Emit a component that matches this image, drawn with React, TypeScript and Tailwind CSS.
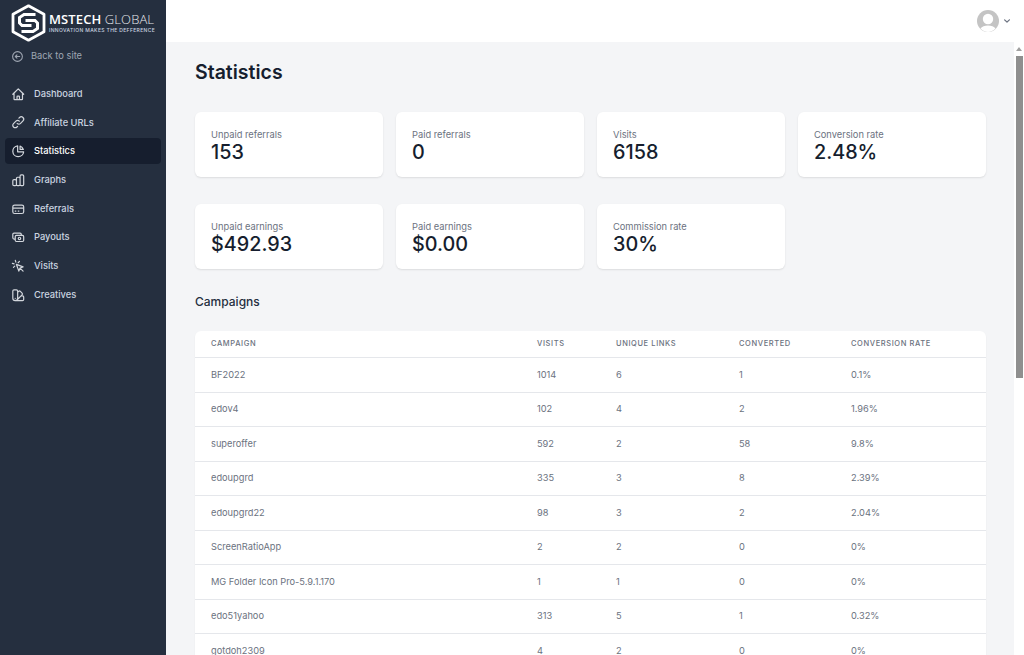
import React from "react";
import {
  HiOutlineHome,
  HiOutlineLink,
  HiOutlineChartPie,
  HiOutlineChartBar,
  HiOutlineCreditCard,
  HiOutlineCash,
  HiOutlineCursorClick,
  HiOutlineColorSwatch,
  HiOutlineArrowCircleLeft,
  HiChevronDown,
} from "react-icons/hi";

const nav = [
  { label: "Dashboard", Icon: HiOutlineHome },
  { label: "Affiliate URLs", Icon: HiOutlineLink },
  { label: "Statistics", Icon: HiOutlineChartPie, active: true },
  { label: "Graphs", Icon: HiOutlineChartBar },
  { label: "Referrals", Icon: HiOutlineCreditCard },
  { label: "Payouts", Icon: HiOutlineCash },
  { label: "Visits", Icon: HiOutlineCursorClick },
  { label: "Creatives", Icon: HiOutlineColorSwatch },
];

const row1 = [
  ["Unpaid referrals", "153"],
  ["Paid referrals", "0"],
  ["Visits", "6158"],
  ["Conversion rate", "2.48%"],
];
const row2 = [
  ["Unpaid earnings", "$492.93"],
  ["Paid earnings", "$0.00"],
  ["Commission rate", "30%"],
];

const rows = [
  ["BF2022", "1014", "6", "1", "0.1%"],
  ["edov4", "102", "4", "2", "1.96%"],
  ["superoffer", "592", "2", "58", "9.8%"],
  ["edoupgrd", "335", "3", "8", "2.39%"],
  ["edoupgrd22", "98", "3", "2", "2.04%"],
  ["ScreenRatioApp", "2", "2", "0", "0%"],
  ["MG Folder Icon Pro-5.9.1.170", "1", "1", "0", "0%"],
  ["edo51yahoo", "313", "5", "1", "0.32%"],
  ["gotdoh2309", "4", "2", "0", "0%"],
];

const cols = "grid grid-cols-[326px_79px_123px_112px_1fr]";

function Logo() {
  return (
    <svg width="36" height="38" viewBox="0 0 36 38" fill="none" className="shrink-0">
      <path d="M17.5 1.8 L33 10.2 V27.8 L17.5 36.2 L2 27.8 V10.2 Z" stroke="#fff" strokeWidth="2.8" strokeLinejoin="round" />
      <path d="M24.5 10.5 H13 L8.5 13.5 V19 L11 21.5 H20.5" stroke="#fff" strokeWidth="3" strokeLinejoin="miter" />
      <path d="M10.5 27.5 H22 L26.5 24.5 V19 L24 16.5 H14.5" stroke="#fff" strokeWidth="3" strokeLinejoin="miter" />
    </svg>
  );
}

function Card({ label, value }: { label: string; value: string }) {
  return (
    <div className="h-[65px] rounded-md bg-white px-4 pt-[17px] shadow-[0_1px_2px_rgba(0,0,0,0.1)]">
      <div className="text-[9.3px] leading-[11px] text-[#6b7280]">{label}</div>
      <div className="text-[19.8px] font-medium leading-[24px] text-[#161e2e]">{value}</div>
    </div>
  );
}

export default function App() {
  return (
    <div className="flex h-screen overflow-hidden bg-white font-['Inter',sans-serif]">
      <aside className="w-[166px] shrink-0 bg-[#252f3f]">
        <div className="flex h-[42px] items-center gap-[2px] pl-[11px] pt-[4px]">
          <Logo />
          <div className="flex flex-col">
            <span className="whitespace-nowrap font-['Open_Sans',sans-serif] text-[13px] leading-[15px] tracking-[0.1px] text-white">
              <span className="font-semibold">MSTECH</span> <span className="font-light text-[#e5e7eb]">GLOBAL</span>
            </span>
            <span className="whitespace-nowrap text-[5px] font-medium leading-[7px] tracking-[0.35px] text-[#cbd5e0]">
              INNOVATION MAKES THE DEFFERENCE
            </span>
          </div>
        </div>
        <div className="mt-[6px] flex h-4 items-center gap-[7px] pl-[11px] text-[9.3px] text-[#9fa6b2]">
          <HiOutlineArrowCircleLeft className="h-[13px] w-[13px]" />
          Back to site
        </div>
        <nav className="mt-[17px] flex flex-col gap-[2.7px] px-[5px]">
          {nav.map(({ label, Icon, active }) => (
            <div
              key={label}
              className={
                active
                  ? "flex h-[26px] items-center gap-[8.5px] rounded-[4px] bg-[#161e2e] pl-[6px] text-[9.3px] font-medium text-white"
                  : "flex h-[26px] items-center gap-[8.5px] rounded-[4px] pl-[6px] text-[9.3px] font-medium text-[#cbd5e0]"
              }
            >
              <Icon className="h-[14.5px] w-[14.5px] text-[#d2d6dc]" />
              {label}
            </div>
          ))}
        </nav>
      </aside>

      <div className="flex min-w-0 flex-1 flex-col">
        <header className="z-10 flex h-[42px] shrink-0 items-center justify-end gap-[2px] bg-white pr-[11px]">
          <svg width="22" height="22" viewBox="0 0 22 22">
            <circle cx="11" cy="11" r="11" fill="#c4c4c4" />
            <circle cx="11" cy="9" r="5.2" fill="#fff" />
            <path d="M3.5 18.5 C6 14.5 16 14.5 18.5 18.5 C14.5 23 7.5 23 3.5 18.5 Z" fill="#fff" />
          </svg>
          <HiChevronDown className="h-[12px] w-[12px] text-[#6b7280]" />
        </header>

        <div className="flex min-h-0 flex-1">
          <main className="min-w-0 flex-1 overflow-hidden bg-[#f4f5f7] pl-[29px] pr-[28px] pt-[18px]">
            <h1 className="text-[19.5px] font-semibold leading-[24px] text-[#161e2e]">Statistics</h1>

            <div className="mt-[28px] grid grid-cols-4 gap-x-[13px] gap-y-[27px]">
              {row1.map(([l, v]) => (
                <Card key={l} label={l} value={v} />
              ))}
              {row2.map(([l, v]) => (
                <Card key={l} label={l} value={v} />
              ))}
            </div>

            <h2 className="mt-[26px] text-[12px] font-medium leading-[14px] text-[#252f3f]">Campaigns</h2>

            <div className="mt-[22px] rounded-md bg-white shadow-[0_1px_2px_rgba(0,0,0,0.06)]">
              <div className={`${cols} h-[27px] items-center border-b border-[#e5e7eb] pl-4 text-[7.5px] font-medium uppercase tracking-[0.6px] text-[#6b7280]`}>
                <div>Campaign</div>
                <div>Visits</div>
                <div>Unique links</div>
                <div>Converted</div>
                <div>Conversion rate</div>
              </div>
              {rows.map((r) => (
                <div key={r[0]} className={`${cols} h-[34.5px] items-center border-b border-[#e5e7eb] pl-4 text-[9.25px] text-[#6b7280]`}>
                  {r.map((c, i) => (
                    <div key={i}>{c}</div>
                  ))}
                </div>
              ))}
            </div>
          </main>

          <div className="flex w-[10px] shrink-0 flex-col items-center bg-white pt-[5px]">
            <div className="h-0 w-0 border-x-[3px] border-b-[4px] border-x-transparent border-b-[#a0a0a0]" />
            <div className="mt-[5px] h-[322px] w-[7px] bg-[#8f8f8f]" />
          </div>
        </div>
      </div>
    </div>
  );
}
